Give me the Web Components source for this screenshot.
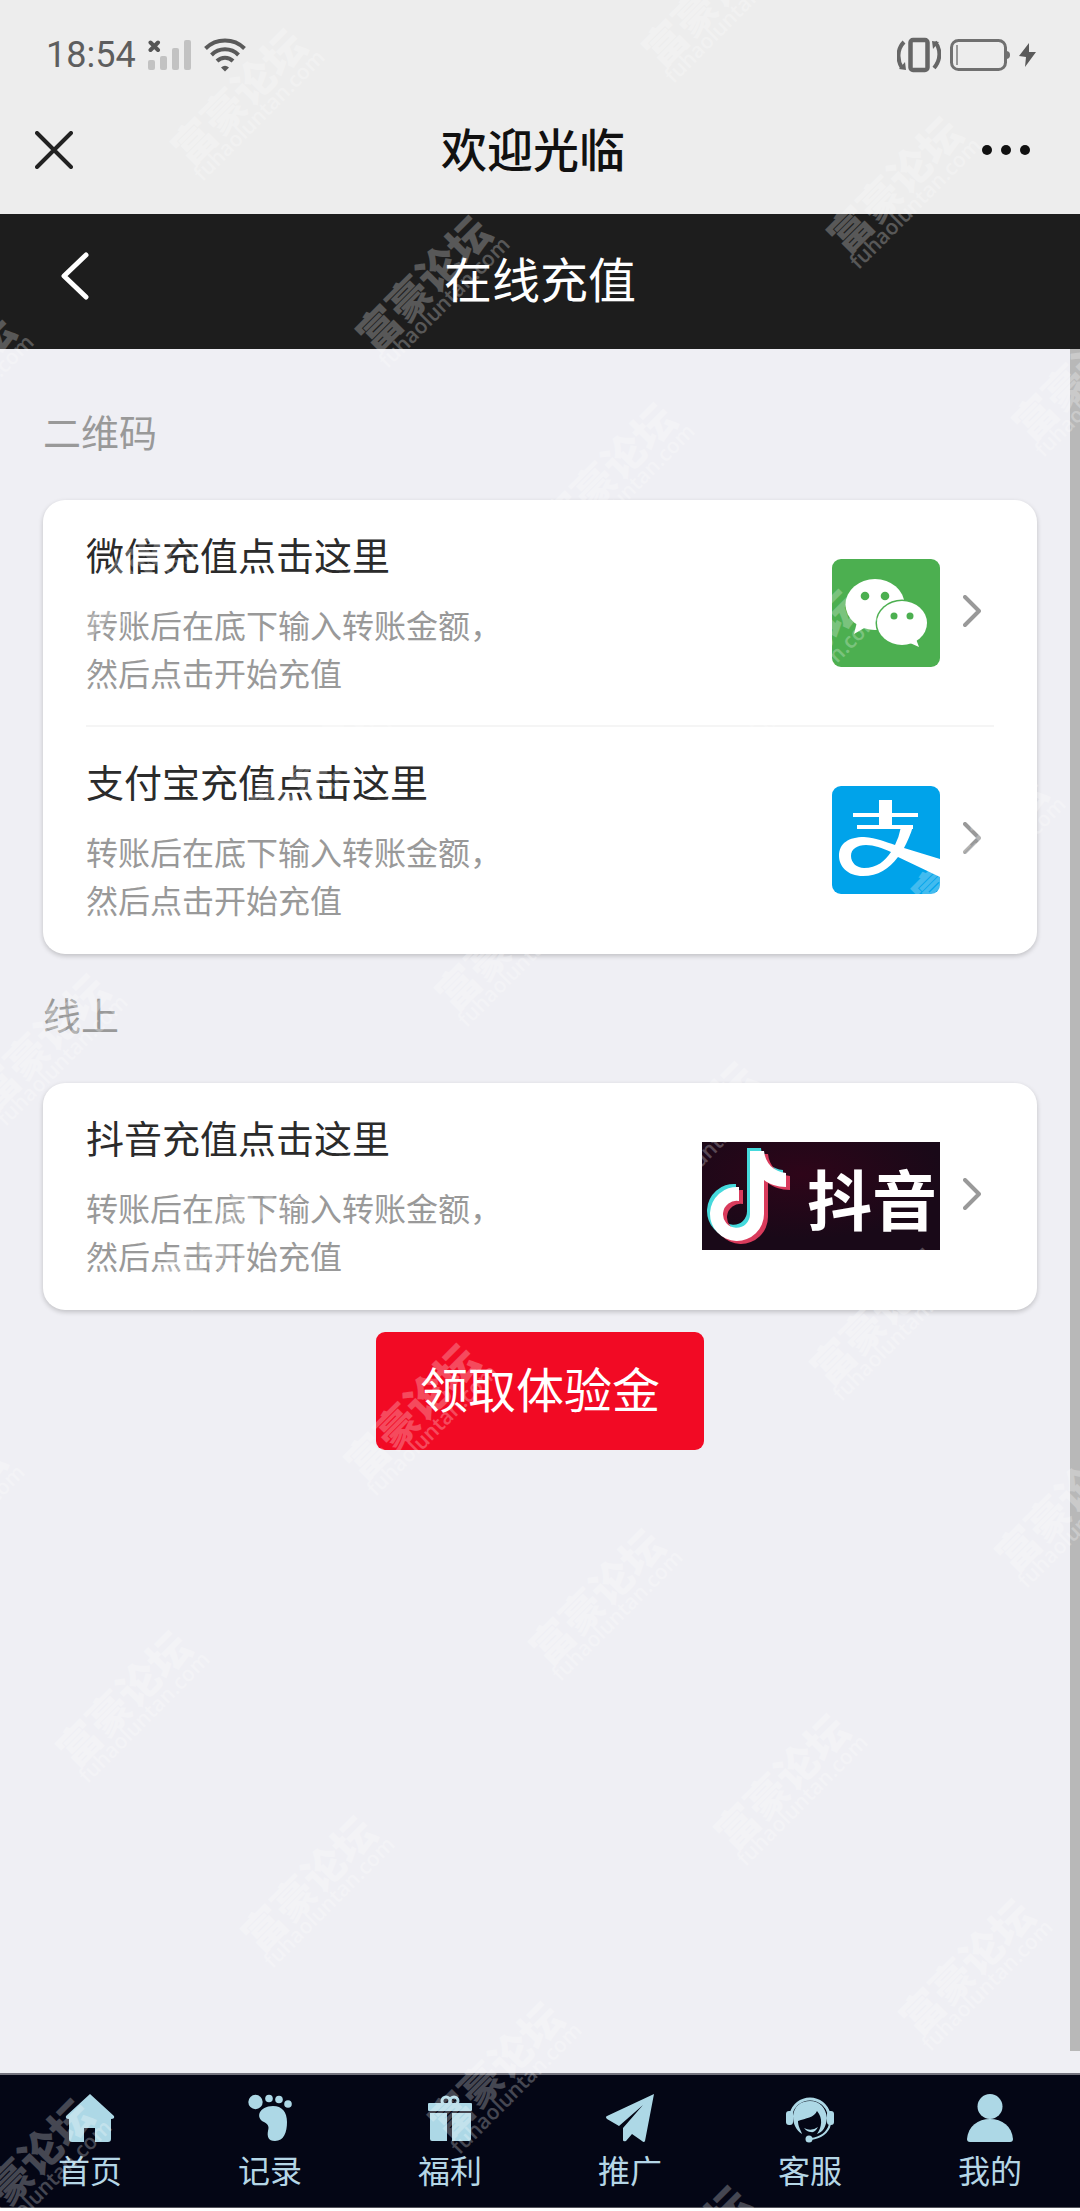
<!DOCTYPE html>
<html lang="zh-CN">
<head>
<meta charset="utf-8">
<meta name="viewport" content="width=device-width, initial-scale=1">
<title>在线充值</title>
<style>
  body { margin: 0; background: #fff; font-family: "Noto Sans CJK SC", "Noto Sans", sans-serif; }
</style>
</head>
<body>
<recharge-page></recharge-page>

<script>
const define = (name, html, setup) => {
  const template = document.createElement('template');
  template.innerHTML = html;
  customElements.define(name, class extends HTMLElement {
    constructor() {
      super();
      this.attachShadow({ mode: 'open' }).append(template.content.cloneNode(true));
    }
    connectedCallback() { if (setup) setup(this, this.shadowRoot); }
  });
};

/* Phone status line */
define('status-bar', `
<style>
  :host { display: flex; align-items: center; justify-content: space-between; height: 62px; padding: 24px 44px 0 46px; color: #5e5e5e; }
  div { display: flex; align-items: center; }
  .left { gap: 12px; }
  .right { gap: 9px; }
  time { font: 36px/44px Roboto, sans-serif; }
  svg { display: block; }
</style>
<div class="left">
  <time>18:54</time>
  <svg width="44" height="32" viewBox="0 0 44 32" aria-label="无信号">
    <path d="M2.500 3.500 L10 11 M10 3.500 L2.500 11" stroke="#555" stroke-width="4" stroke-linecap="round"/>
    <g fill="#c2c2c2"><rect x="0" y="21" width="7" height="10" rx="2"/><rect x="12" y="17" width="7" height="14" rx="2"/><rect x="24" y="9" width="7" height="22" rx="2"/><rect x="36" y="1" width="7" height="30" rx="2"/></g>
  </svg>
  <svg width="42" height="34" viewBox="0 0 42 34" fill="none" stroke="#5a5a5a" stroke-width="4" aria-label="无线网络">
    <path d="M1.500 10.500 A28 28 0 0 1 40.500 10.500"/>
    <path d="M7.500 17 A19 19 0 0 1 34.500 17"/>
    <path d="M13 23 A11.500 11.500 0 0 1 29 23"/>
    <path d="M21 33.500 L17 29.500 Q21 26 25 29.500 Z" fill="#5a5a5a" stroke="none"/>
  </svg>
</div>
<div class="right">
  <svg width="44" height="36" viewBox="0 0 44 36" fill="none" stroke="#666" aria-label="振动">
    <rect x="13.500" y="3" width="17" height="30" rx="2.500" stroke-width="4.500"/>
    <path d="M7 5 C0 12 0 23 5 31" stroke-width="4"/><path d="M37 31 C44 23 44 12 38 5" stroke-width="4"/>
    <path d="M2 32 L9 33 L8 25 Z M35 4 L42 5 L36 12 Z" fill="#666" stroke="none"/>
  </svg>
  <svg width="60" height="34" viewBox="0 0 60 34" fill="none" stroke="#707070" aria-label="电池">
    <rect x="1.500" y="2.500" width="54" height="29" rx="7" stroke-width="3"/>
    <path d="M56 13 Q60 13 60 17 Q60 21 56 21 Z" fill="#707070" stroke="none"/>
    <path d="M7 7 V27" stroke="#444" stroke-width="1"/>
  </svg>
  <svg width="17" height="24" viewBox="0 0 17 24" aria-label="充电中"><path d="M10 0 L0 13 L7 14 L6 24 L17 9 L10 9 Z" fill="#5a5a5a"/></svg>
</div>`);

/* Host app title line */
define('app-bar', `
<style>
  :host { display: grid; grid-template-columns: 1fr auto 1fr; align-items: center; height: 128px; padding: 0 49px 0 35px; }
  button { display: flex; justify-self: start; padding: 0; border: 0; background: none; }
  button:last-child { justify-self: end; }
  h1 { margin: 0; padding-bottom: 6px; font-size: 46px; line-height: 64px; font-weight: 500; color: #111; }
</style>
<button type="button" aria-label="关闭"><svg width="38" height="38" viewBox="0 0 38 38" stroke="#222" stroke-width="4" stroke-linecap="round"><path d="M2 2 L36 36 M36 2 L2 36"/></svg></button>
<h1><slot></slot></h1>
<button type="button" aria-label="更多"><svg width="50" height="12" viewBox="0 0 50 12" fill="#111"><circle cx="6" cy="6" r="5"/><circle cx="25" cy="6" r="5"/><circle cx="44" cy="6" r="5"/></svg></button>`);

/* Page title line */
define('title-bar', `
<style>
  :host { display: grid; grid-template-columns: 1fr auto 1fr; align-items: center; height: 135px; padding: 0 60px; background: #1d1d1d; color: #fff; }
  button { justify-self: start; display: flex; padding: 0 0 12px; border: 0; background: none; }
  h2 { margin: 0; padding-bottom: 10px; font-size: 48px; line-height: 64px; font-weight: 400; }
</style>
<button type="button" aria-label="返回"><svg width="30" height="50" viewBox="0 0 30 50" fill="none" stroke="#fff" stroke-width="5" stroke-linecap="round" stroke-linejoin="round"><path d="M26 4 L4 25 L26 46"/></svg></button>
<h2><slot></slot></h2>`);

/* Titled group of payment rows */
define('pay-group', `
<style>
  :host { display: block; }
  h3 { margin: 0; padding: 31px 0 41px; font-size: 38px; line-height: 57px; font-weight: 400; color: #999; }
  .card { padding: 0 43px; border-radius: 22px; background: #fff; box-shadow: 0 2px 5px rgba(0,0,0,.2); }
</style>
<h3></h3>
<div class="card"><slot></slot></div>`, (el, root) => {
  root.querySelector('h3').textContent = el.getAttribute('label');
});

define('pay-row', `
<style>
  :host { display: block; border-bottom: 2px solid #f5f5f5; }
  :host(:last-child) { border-color: transparent; }
  a { display: flex; align-items: center; gap: 23px; padding: 30px 13px 29px 0; color: inherit; text-decoration: none; }
  .text { flex: 1; }
  strong { display: block; margin-bottom: 22px; font-size: 38px; line-height: 48px; font-weight: 400; color: #2b2b2b; }
  p { margin: 0; font-size: 32px; line-height: 48px; color: #999; }
  svg { display: block; }
</style>
<a href="#">
  <div class="text"><strong></strong><p>转账后在底下输入转账金额，<br>然后点击开始充值</p></div>
  <slot></slot>
  <svg width="18" height="36" viewBox="0 0 18 36" fill="none" stroke="#999" stroke-width="4" stroke-linecap="round" stroke-linejoin="round"><path d="M2 2 L16 16 L2 30"/></svg>
</a>`, (el, root) => {
  root.querySelector('strong').textContent = el.getAttribute('name');
});

/* Payment brand logos */
define('wechat-logo', `
<style>:host, svg { display: block; }</style>
<svg width="108" height="108" viewBox="0 0 108 108" aria-label="微信">
  <rect width="108" height="108" rx="9" fill="#4caf50"/>
  <g fill="#fff"><ellipse cx="43" cy="45.500" rx="29.500" ry="25.500"/><path d="M25 63 L22 75 L34 68 Z"/></g>
  <ellipse cx="70" cy="64" rx="26.500" ry="23.500" fill="#4caf50"/>
  <g fill="#fff"><ellipse cx="70" cy="64" rx="25" ry="22"/><path d="M78 84 L87 88 L84 80 Z"/></g>
  <g fill="#4caf50"><circle cx="33" cy="37" r="4.300"/><circle cx="53" cy="37" r="4.300"/><circle cx="62" cy="57" r="3.500"/><circle cx="78" cy="57" r="3.500"/></g>
</svg>`);

define('alipay-logo', `
<style>:host, svg { display: block; }</style>
<svg width="108" height="108" viewBox="0 0 108 108" aria-label="支付宝">
  <rect width="108" height="108" rx="9" fill="#00a3ea"/>
  <g fill="#fff">
    <rect x="47" y="14" width="13" height="26"/><rect x="21" y="27" width="65" height="4"/><rect x="25" y="39" width="56" height="4"/>
    <path fill-rule="evenodd" d="M69 41 L81 40 C79 48 75 56 72 62 L108 73 V91 L66 71 C57 83 46 90 31 90 C15 90 7 80 7 70 C7 57 17 51 32 51 C45 52 54 56 63 59 Q67 51 69 41 Z M59 66 C50 62 42 59 34 59 C25 59 19 63 19 70 C19 77 25 82 32 82 C45 82 53 75 59 66 Z"/>
  </g>
</svg>`);

define('douyin-logo', `
<style>
  :host, svg { display: block; }
  text { font: 700 65px "Noto Sans CJK SC", sans-serif; }
</style>
<svg width="238" height="108" viewBox="0 0 238 108">
  <defs>
    <radialGradient id="bg" cx=".42" cy=".3" r=".6"><stop offset="0" stop-color="#2e0519"/><stop offset="1" stop-color="#190918"/></radialGradient>
    <path id="note" d="M48 8 H62 C63 20 72 29 84 30 V44 C75 44 67 41 62 37 V71 A27 27 0 1 1 37 44 V58 A13.500 13.500 0 1 0 48 71 Z"/>
  </defs>
  <rect width="238" height="108" fill="url(#bg)"/>
  <use href="#note" x="-3" y="-2" fill="#45d9dc"/>
  <use href="#note" x="4" y="4" fill="#d93b5c"/>
  <use href="#note" x="0" y="1" fill="#fff"/>
  <text x="105" y="83" fill="#fff">抖音</text>
</svg>`);

/* Bottom navigation */
define('tab-bar', `
<style>
  :host { display: block; background: #040615; border-top: 2px solid #74747e; border-bottom: 1px solid #55555c; }
  nav { display: flex; height: 132px; }
</style>
<nav><slot></slot></nav>`);

const tabIcons = {
  home: '<path d="M24 0 L48 22 Q49 25 45 25 V45 Q45 48 42 48 H29 V34 H18 V48 H6 Q3 48 3 45 V25 Q-1 25 0 22 Z"/>',
  foot: '<circle cx="9.500" cy="8" r="7.200"/><circle cx="23" cy="4.500" r="3.800"/><circle cx="33" cy="5.500" r="3.800"/><circle cx="42" cy="10" r="3.800"/><path d="M27 12 C36 12 41 18 41 28 C41 38 38 47 29 47 C22 47 21 42 22 37 C23 33 23 31 18 28 C9 24 13 12 27 12 Z"/>',
  gift: '<rect x="2" y="9" width="44" height="8" rx="1"/><path d="M4 19 H21 V47 H6 Q4 47 4 45 Z M26 19 H45 V45 Q45 47 43 47 H26 Z"/><g fill="none" stroke="#add8e6" stroke-width="3"><circle cx="20" cy="7" r="4"/><circle cx="28" cy="7" r="4"/></g>',
  plane: '<path d="M48 0 L39 47 Q38 49 36 47 L26 40 L20 47 Q17 48 17 46 V34 L37 11 L13 32 L1 25 Q-1 23 1 22 Z"/>',
  service: '<path d="M5 20 A19.500 19.500 0 0 1 43 20" fill="none" stroke="#add8e6" stroke-width="3"/><rect x="0" y="17" width="7" height="14" rx="3"/><rect x="41" y="17" width="7" height="14" rx="3"/><path d="M7 22 C8 12 15 7 24 7 C34 7 40 14 41 24 C40 33 37 38 31 40 C36 33 37 24 31 17 C28 24 20 24 12 27 C12 33 15 36 16 40 C10 36 7 30 7 22 Z"/><path d="M18 34 Q25 38 32 33 Q29 39 25 38 Q21 38 18 34 Z"/><path d="M44 30 C42 39 34 44 25 45" fill="none" stroke="#add8e6" stroke-width="2"/><circle cx="23" cy="45" r="3.500"/>',
  person: '<circle cx="24" cy="12.500" r="12.500"/><path d="M1 45 C2 32 12 25 24 25 C36 25 46 32 47 45 Q47 48 44 48 H4 Q1 48 1 45 Z"/>'
};
define('tab-item', `
<style>
  :host { flex: 1; display: block; }
  a { display: flex; flex-direction: column; align-items: center; padding-top: 19px; gap: 3px; color: #b5d6e6; font-size: 32px; line-height: 48px; text-decoration: none; }
  svg { display: block; overflow: visible; }
</style>
<a href="#"><svg width="48" height="48" viewBox="0 0 48 48" fill="#add8e6" aria-hidden="true"></svg><span><slot></slot></span></a>`, (el, root) => {
  root.querySelector('svg').innerHTML = tabIcons[el.getAttribute('icon')];
});

/* Diagonal forum stamps scattered over the page */
define('forum-stamps', `
<style>
  :host { position: absolute; inset: 0; overflow: hidden; pointer-events: none; color: #fff; opacity: .26; }
  div { position: absolute; width: 172px; text-align: center; transform: translate(-50%, -50%) rotate(-45deg); white-space: nowrap; }
  b { display: block; font-size: 42px; line-height: 36px; font-weight: 900; }
  span { display: block; font: 600 21px/22px "Open Sans", sans-serif; }
</style>`, (el, root) => {
  [[245,103],[430,290],[615,477],[800,664],[986,850],
   [716,5],[901,191],[1086,379],
   [-46,388],[139,575],[324,762],[509,949],[696,1136],[884,1323],[1069,1510],
   [48,1048],[233,1233],[418,1418],[603,1603],[788,1788],[973,1973],
   [-55,1518],[130,1705],[315,1890],[502,2076],[689,2260],[32,2173]].forEach(([x, y]) => {
    const stamp = document.createElement('div');
    stamp.style.left = x + 'px';
    stamp.style.top = y + 'px';
    stamp.innerHTML = '<b>富豪论坛</b><span>fuhaoluntan.com</span>';
    root.append(stamp);
  });
});

define('recharge-page', `
<style>
  :host { position: relative; display: flex; flex-direction: column; box-sizing: border-box; min-height: 100vh; padding-bottom: 3px; }
  header { background: #ededed; }
  .body { flex: 1; display: flex; background: #efeff4; }
  main { flex: 1; padding: 22px 33px 0 43px; }
  .track { width: 10px; margin-bottom: 22px; background: #b8b8b8; }
  .claim { display: block; margin: 22px auto 0; padding: 20px 44px 28px; border: 0; border-radius: 9px; background: #f20a24; color: #fff; font-family: inherit; font-size: 48px; line-height: 70px; }
</style>
<header><status-bar></status-bar><app-bar>欢迎光临</app-bar></header>
<title-bar>在线充值</title-bar>
<div class="body">
  <main>
    <pay-group label="二维码">
      <pay-row name="微信充值点击这里"><wechat-logo></wechat-logo></pay-row>
      <pay-row name="支付宝充值点击这里"><alipay-logo></alipay-logo></pay-row>
    </pay-group>
    <pay-group label="线上">
      <pay-row name="抖音充值点击这里"><douyin-logo></douyin-logo></pay-row>
    </pay-group>
    <button class="claim" type="button">领取体验金</button>
  </main>
  <div class="track"></div>
</div>
<tab-bar>
  <tab-item icon="home">首页</tab-item>
  <tab-item icon="foot">记录</tab-item>
  <tab-item icon="gift">福利</tab-item>
  <tab-item icon="plane">推广</tab-item>
  <tab-item icon="service">客服</tab-item>
  <tab-item icon="person">我的</tab-item>
</tab-bar>
<forum-stamps aria-hidden="true"></forum-stamps>`);
</script>
</body>
</html>
